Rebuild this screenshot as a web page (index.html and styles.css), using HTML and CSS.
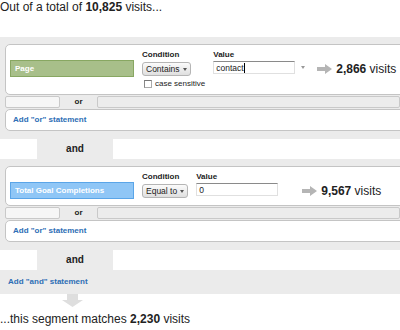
FILE: index.html
```html
<!DOCTYPE html>
<html lang="en">
<head>
    <meta charset="UTF-8">
    <meta name="viewport" content="width=device-width, initial-scale=1.0">
    <link rel="stylesheet" href="styles.css">
</head>
<body>
    <p class="summary">Out of a total of <strong>10,825</strong> visits...</p>

    <div class="group">
        <div class="box cond">
            <div class="col">
                <span class="label"></span>
                <span class="dim dim-green">Page</span>
            </div>
            <div class="col">
                <span class="label">Condition</span>
                <span class="select">Contains <i class="caret"></i></span>
                <span class="check"><span class="checkbox"></span>case sensitive</span>
            </div>
            <div class="col">
                <span class="label">Value</span>
                <span class="combo">
                    <span class="input">contact<span class="cursor"></span></span>
                    <i class="caret caret-light"></i>
                </span>
            </div>
            <div class="result result-tight">
                <svg width="15" height="10" viewBox="0 0 15 10"><path d="M0 3h8V0l7 5-7 5V7H0z" fill="#b5b5b5"/></svg>
                <span><strong>2,866</strong> visits</span>
            </div>
        </div>
        <div class="or-row">
            <span class="slot slot-left"></span>
            <span class="or">or</span>
            <span class="slot slot-right"></span>
        </div>
        <div class="box add-box"><a href="#">Add "or" statement</a></div>
    </div>

    <div class="and-row"><span class="and">and</span></div>

    <div class="group">
        <div class="box cond">
            <div class="col">
                <span class="label"></span>
                <span class="dim dim-blue">Total Goal Completions</span>
            </div>
            <div class="col">
                <span class="label">Condition</span>
                <span class="select">Equal to <i class="caret"></i></span>
            </div>
            <div class="col">
                <span class="label">Value</span>
                <span class="input">0</span>
            </div>
            <div class="result">
                <svg width="15" height="10" viewBox="0 0 15 10"><path d="M0 3h8V0l7 5-7 5V7H0z" fill="#b5b5b5"/></svg>
                <span><strong>9,567</strong> visits</span>
            </div>
        </div>
        <div class="or-row">
            <span class="slot slot-left"></span>
            <span class="or">or</span>
            <span class="slot slot-right"></span>
        </div>
        <div class="box add-box"><a href="#">Add "or" statement</a></div>
    </div>

    <div class="and-row"><span class="and">and</span></div>
    <div class="add-and"><a href="#">Add "and" statement</a></div>
    <svg class="down" width="21" height="13" viewBox="0 0 21 13"><path d="M5 0h11v6h5l-10.5 7L0 6h5z" fill="#dedede"/></svg>

    <p class="summary summary-end">...this segment matches <strong>2,230</strong> visits</p>
</body>
</html>
```

FILE: styles.css
```css
body {
    margin: 0;
    font-family: "Liberation Sans", Arial, sans-serif;
    color: #222;
    background-color: #fff;
}

a {
    color: #2d6eb5;
    text-decoration: none;
}

.summary {
    margin: 0 0 22px;
    font-size: 12px;
    line-height: 15px;
}

.summary-end {
    margin: 5px 0 0;
}

/* boxes run on past the right edge, as in the editor */
.group {
    overflow: hidden;
    background-color: #ebebeb;
    padding: 7px 0 8px 5px;
}

.box {
    margin-right: -10px;
    background-color: #fff;
    border: 1px solid #c4c4c4;
    border-radius: 5px;
}

.cond {
    display: flex;
    align-items: flex-start;
    gap: 8px;
    padding: 5px 4px 6px;
}

.col {
    display: flex;
    flex-direction: column;
    align-items: flex-start;
}

.label {
    height: 10px;
    font-size: 8px;
    font-weight: bold;
    line-height: 10px;
}

.dim {
    box-sizing: border-box;
    width: 124px;
    height: 17px;
    padding-left: 4px;
    border: 1px solid;
    color: #fff;
    font-size: 8px;
    font-weight: bold;
    line-height: 15px;
}

.dim-green {
    background-color: #a8bf8a;
    border-color: #88a762;
}

.dim-blue {
    background-color: #8fc6f6;
    border-color: #5aa5e8;
}

.select {
    box-sizing: border-box;
    display: inline-flex;
    align-items: center;
    gap: 3px;
    height: 14px;
    margin-top: 2px;
    padding: 0 3px;
    border: 1px solid #b5b5b5;
    border-radius: 3px;
    background: linear-gradient(#fbfbfb, #dfdfdf);
    font-size: 8.5px;
    color: #222;
}

.caret {
    width: 0;
    height: 0;
    border-left: 2.5px solid transparent;
    border-right: 2.5px solid transparent;
    border-top: 3px solid #555;
}

.caret-light {
    margin-left: 6px;
    border-top-color: #999;
}

.check {
    display: flex;
    align-items: center;
    gap: 3px;
    height: 9px;
    margin: 3px 0 0 2px;
    font-size: 8px;
}

.checkbox {
    box-sizing: border-box;
    width: 8px;
    height: 8px;
    border: 1px solid #aaa;
    border-top-color: #777;
    border-left-color: #888;
    background-color: #fff;
}

.combo {
    display: flex;
    align-items: center;
}

.input {
    box-sizing: border-box;
    display: flex;
    align-items: center;
    width: 82px;
    height: 13px;
    margin-top: 1px;
    padding-left: 2px;
    border: 1px solid #e0e0e0;
    border-top-color: #8a8a8a;
    font-size: 8.5px;
    background-color: #fff;
}

.cursor {
    width: 1px;
    height: 10px;
    background-color: #000;
}

.result {
    display: flex;
    align-items: center;
    gap: 4px;
    height: 17px;
    margin: 10px 0 0 16px;
    font-size: 12px;
    white-space: nowrap;
}

.result-tight {
    margin-left: 4px;
}

.or-row {
    display: flex;
    height: 14px;
    padding: 1px 0;
    box-sizing: border-box;
}

.slot {
    box-sizing: border-box;
    border: 1px solid #c9c9c9;
    border-radius: 2px;
}

.slot-left {
    width: 55px;
    background-color: #f6f6f6;
}

.slot-right {
    flex: 1;
    background-color: #ececec;
}

.or {
    width: 37px;
    text-align: center;
    font-size: 8px;
    font-weight: bold;
    line-height: 12px;
}

.add-box {
    box-sizing: border-box;
    height: 22px;
    padding-left: 7px;
    font-size: 8px;
    font-weight: bold;
    line-height: 20px;
}

.and-row {
    height: 20px;
}

.and {
    display: block;
    width: 76px;
    margin-left: 37px;
    background-color: #ebebeb;
    text-align: center;
    font-size: 10px;
    font-weight: bold;
    line-height: 20px;
}

.add-and {
    height: 24px;
    padding-left: 8px;
    background-color: #ebebeb;
    font-size: 8px;
    font-weight: bold;
    line-height: 24px;
}

.down {
    display: block;
    margin-left: 62px;
}
```
